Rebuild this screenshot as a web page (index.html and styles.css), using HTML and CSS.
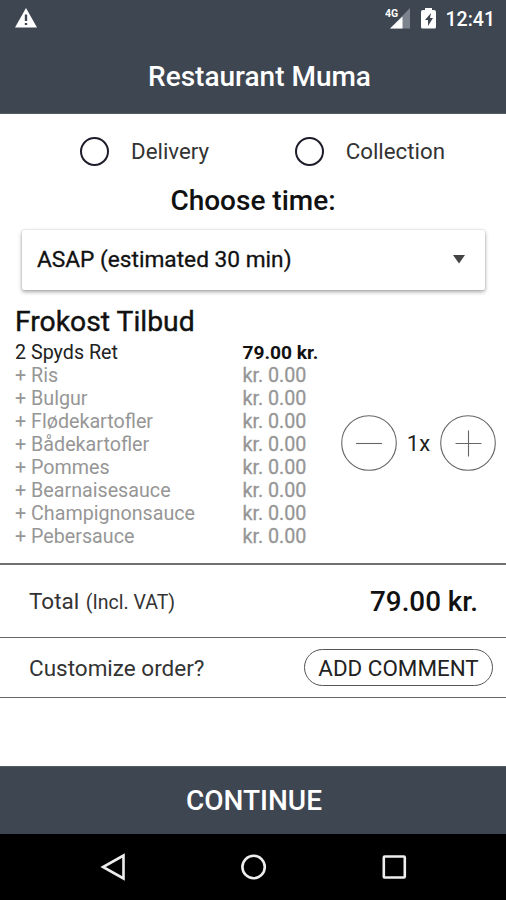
FILE: index.html
```html
<!DOCTYPE html>
<html lang="en">
<head>
<meta charset="utf-8">
<title>Restaurant Muma</title>
<link rel="stylesheet" href="styles.css">
</head>
<body>
<div class="app">
  <div class="status">
    <svg class="warn" width="22" height="20" viewBox="0 0 22 20"><path fill="#fff" fill-rule="evenodd" d="M11 0 22 19.500H0ZM9.800 6.500v6.500h2.400V6.500Zm0 8.500v2h2.400v-2Z"/></svg>
    <div class="status-right">
      <svg width="27" height="22" viewBox="0 0 27 22"><path fill="#7c838c" d="M25 0V20.500H5Z"/><path fill="#fff" d="M17.500 8.500V20.500H5Z"/><text class="net" x="0" y="9">4G</text></svg>
      <svg class="battery" width="15" height="21" viewBox="0 0 15 21"><path fill="#fff" fill-rule="evenodd" d="M4 0h7v2h2q2 0 2 2v15q0 1.500-1.500 1.500h-12Q0 20.500 0 19V4q0-2 2-2h2ZM10 5 4 12h3v6l5-8H9Z"/></svg>
      <span class="clock">12:41</span>
    </div>
  </div>
  <header class="title"><span>Restaurant Muma</span></header>
  <main>
    <div class="modes">
      <label class="mode"><i class="radio"></i><span>Delivery</span></label>
      <label class="mode"><i class="radio"></i><span>Collection</span></label>
    </div>
    <h2 class="choose">Choose time:</h2>
    <div class="select"><span>ASAP (estimated 30 min)</span><svg width="12" height="9" viewBox="0 0 12 9"><path fill="#444" d="M0 0h12L6 8.500Z"/></svg></div>
    <section class="item">
      <h3>Frokost Tilbud</h3>
      <div class="item-body">
        <div class="lines">
          <div class="line main"><span>2 Spyds Ret</span><b>79.00 kr.</b></div>
          <div class="line"><span>+ Ris</span><span class="price">kr. 0.00</span></div>
          <div class="line"><span>+ Bulgur</span><span class="price">kr. 0.00</span></div>
          <div class="line"><span>+ Flødekartofler</span><span class="price">kr. 0.00</span></div>
          <div class="line"><span>+ Bådekartofler</span><span class="price">kr. 0.00</span></div>
          <div class="line"><span>+ Pommes</span><span class="price">kr. 0.00</span></div>
          <div class="line"><span>+ Bearnaisesauce</span><span class="price">kr. 0.00</span></div>
          <div class="line"><span>+ Champignonsauce</span><span class="price">kr. 0.00</span></div>
          <div class="line"><span>+ Pebersauce</span><span class="price">kr. 0.00</span></div>
        </div>
        <div class="qty">
          <svg width="56" height="56" viewBox="0 0 56 56"><circle cx="28" cy="28" r="27.300"/><path d="M15 28.500h26"/></svg>
          <span>1x</span>
          <svg width="56" height="56" viewBox="0 0 56 56"><circle cx="28" cy="28" r="27.300"/><path d="M15.500 28.500h26M28.500 15.500v26"/></svg>
        </div>
      </div>
    </section>
    <div class="total"><span class="label">Total <small>(Incl. VAT)</small></span><strong>79.00 kr.</strong></div>
    <div class="custom"><span class="ask">Customize order?</span><span class="add">ADD COMMENT</span></div>
  </main>
  <div class="continue"><span>CONTINUE</span></div>
  <nav class="nav">
    <svg width="28" height="28" viewBox="0 0 28 28"><path d="M25.500 2.500V25.500L5 14Z"/></svg>
    <svg width="28" height="28" viewBox="0 0 28 28"><circle cx="14.600" cy="14" r="11.200"/></svg>
    <svg width="28" height="28" viewBox="0 0 28 28"><rect x="3.800" y="3.500" width="21" height="21" rx="1"/></svg>
  </nav>
</div>
</body>
</html>
```
FILE: styles.css
```css
* { box-sizing: border-box; }
body { margin: 0; background: #fff; font-family: Roboto, sans-serif; color: #222; }
.app { width: 506px; height: 900px; display: flex; flex-direction: column; white-space: nowrap; overflow: hidden; }
svg { display: block; flex: none; }
.status { height: 38px; background: #3e4651; display: flex; justify-content: space-between; padding: 8px 11px 0 15px; }
.status-right { display: flex; }
.net { font: 700 10.5px Roboto, sans-serif; fill: #fff; }
.battery { margin-left: 9px; }
.clock { margin-left: 10px; color: #fff; font-size: 19.5px; line-height: 23px; font-weight: 500; }
.title { height: 76px; background: #3e4651; border-bottom: 1px solid #555d67; color: #fff; text-align: center; font-size: 28px; font-weight: 500; line-height: 78px; padding-left: 13px; }
main { flex: 1; }
.modes { display: flex; height: 67px; padding: 8px 61px 0 80px; justify-content: space-between; align-items: center; }
.mode { display: flex; align-items: center; font-size: 22.3px; color: #333; }
.mode span { padding-bottom: 2px; }
.radio { width: 29px; height: 29px; border: 2px solid #1d1d2b; border-radius: 50%; margin-right: 22px; }
.choose { margin: 0; text-align: center; font-size: 28px; line-height: 40px; font-weight: 500; color: #111; }
.select { margin: 9px 21px 0 22px; height: 60px; padding: 0 20px 1px 15px; display: flex; align-items: center; justify-content: space-between; font-size: 22.7px; font-weight: 400; -webkit-text-stroke: .3px; color: #111; border-radius: 2px; box-shadow: 0 2px 4px #0005, 0 0 2px #0003; }
.item { height: 273px; padding: 13px 10px 0 15px; }
h3 { margin: 0 0 1px; font-size: 28.3px; line-height: 37px; font-weight: 400; -webkit-text-stroke: .4px; color: #111; }
.item-body { display: flex; align-items: center; justify-content: space-between; }
.line { display: grid; grid-template-columns: 227.5px 90px; font-size: 19.7px; line-height: 23px; color: #969696; }
.main { color: #222; }
.main b { font-size: 19.2px; color: #111; }
.price { -webkit-text-stroke: .3px; }
.qty { display: flex; align-items: center; width: 155px; justify-content: space-between; font-size: 22px; padding-bottom: 3px; }
.qty svg, .nav svg { fill: none; stroke: #666; stroke-width: 1.1; }
.total { height: 75px; border-top: 2px solid #707070; border-bottom: 1px solid #666; padding: 1px 28px 0; display: flex; justify-content: space-between; align-items: center; font-size: 22.5px; color: #333; }
.label { padding: 0 0 2px 1px; }
.total small { font-size: 19.5px; margin-left: 1px; }
.total strong { font-size: 27.8px; font-weight: 500; color: #111; }
.custom { height: 60px; border-bottom: 1px solid #666; padding: 0 13px 0 28px; display: flex; justify-content: space-between; align-items: center; font-size: 22.5px; color: #333; }
.ask { padding-left: 1px; }
.add { height: 37px; width: 189px; border: 1px solid #555; border-radius: 19px; font-size: 22.4px; line-height: 36px; text-align: center; color: #222; }
.continue { height: 68px; background: #3e4651; border-top: 1px solid #555d67; color: #fff; text-align: center; line-height: 67px; font-size: 28px; font-weight: 500; padding-left: 2px; }
.nav { height: 66px; background: #000; display: flex; justify-content: space-between; padding: 19px 98px 0; }
.nav svg { stroke: #eee; stroke-width: 2.6; }
```
